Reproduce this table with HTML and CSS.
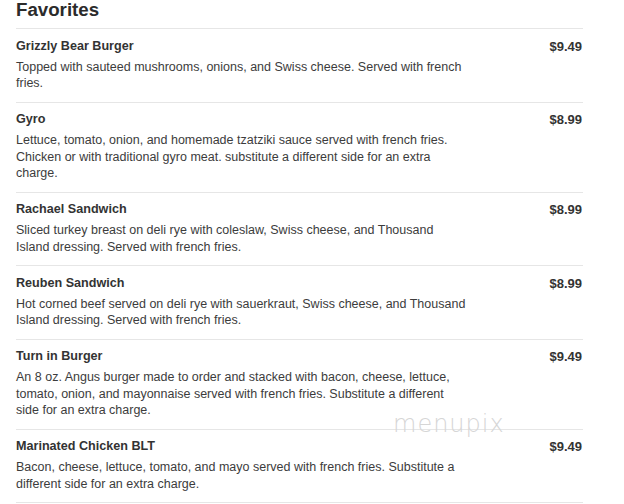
FILE: index.html
```html
<!DOCTYPE html>
<html>
<head>
<meta charset="utf-8">
<link rel="stylesheet" href="styles.css">
</head>
<body>
<div class="menu">
  <h2 class="title">Favorites</h2>
  <div class="item">
    <div class="head"><span class="name">Grizzly Bear Burger</span><span class="price">$9.49</span></div>
    <p class="desc">Topped with sauteed mushrooms, onions, and Swiss cheese. Served with french fries.</p>
  </div>
  <div class="item">
    <div class="head"><span class="name">Gyro</span><span class="price">$8.99</span></div>
    <p class="desc">Lettuce, tomato, onion, and homemade tzatziki sauce served with french fries. Chicken or with traditional gyro meat. substitute a different side for an extra charge.</p>
  </div>
  <div class="item">
    <div class="head"><span class="name">Rachael Sandwich</span><span class="price">$8.99</span></div>
    <p class="desc">Sliced turkey breast on deli rye with coleslaw, Swiss cheese, and Thousand Island dressing. Served with french fries.</p>
  </div>
  <div class="item">
    <div class="head"><span class="name">Reuben Sandwich</span><span class="price">$8.99</span></div>
    <p class="desc">Hot corned beef served on deli rye with sauerkraut, Swiss cheese, and Thousand Island dressing. Served with french fries.</p>
  </div>
  <div class="item">
    <div class="head"><span class="name">Turn in Burger</span><span class="price">$9.49</span></div>
    <p class="desc">An 8 oz. Angus burger made to order and stacked with bacon, cheese, lettuce, tomato, onion, and mayonnaise served with french fries. Substitute a different side for an extra charge.</p>
  </div>
  <div class="item">
    <div class="head"><span class="name">Marinated Chicken BLT</span><span class="price">$9.49</span></div>
    <p class="desc">Bacon, cheese, lettuce, tomato, and mayo served with french fries. Substitute a different side for an extra charge.</p>
  </div>
  <div class="watermark">menupix</div>
</div>
</body>
</html>
```
FILE: styles.css
```css
html, body {
  margin: 0;
  padding: 0;
  background: #fff;
}
body {
  font-family: "Liberation Sans", Arial, sans-serif;
  color: #333;
}
.menu {
  position: relative;
  width: 567px;
  margin-left: 16px;
}
.title {
  margin: 0;
  padding-top: 1px;
  font-size: 18.7px;
  font-weight: bold;
  line-height: 18px;
  color: #2b2b2b;
  padding-bottom: 9px;
  border-bottom: 1px solid #e6e6e6;
}
.item {
  padding: 9.5px 0 10px;
  border-bottom: 1px solid #e6e6e6;
}
.head {
  display: flex;
  justify-content: space-between;
  align-items: flex-start;
  line-height: 15px;
}
.name {
  font-size: 12.6px;
  font-weight: bold;
  color: #333;
}
.price {
  font-size: 13px;
  font-weight: bold;
  color: #333;
  padding-right: 1px;
}
.desc {
  margin: 5px 0 0;
  width: 453px;
  font-size: 12.5px;
  line-height: 16.5px;
  color: #3c3c3c;
}
.watermark {
  position: absolute;
  left: 377px;
  top: 410px;
  font-family: "DejaVu Sans", sans-serif;
  font-weight: 200;
  font-size: 24px;
  line-height: 28px;
  letter-spacing: 1px;
  color: #d6d6d6;
  pointer-events: none;
}
```
